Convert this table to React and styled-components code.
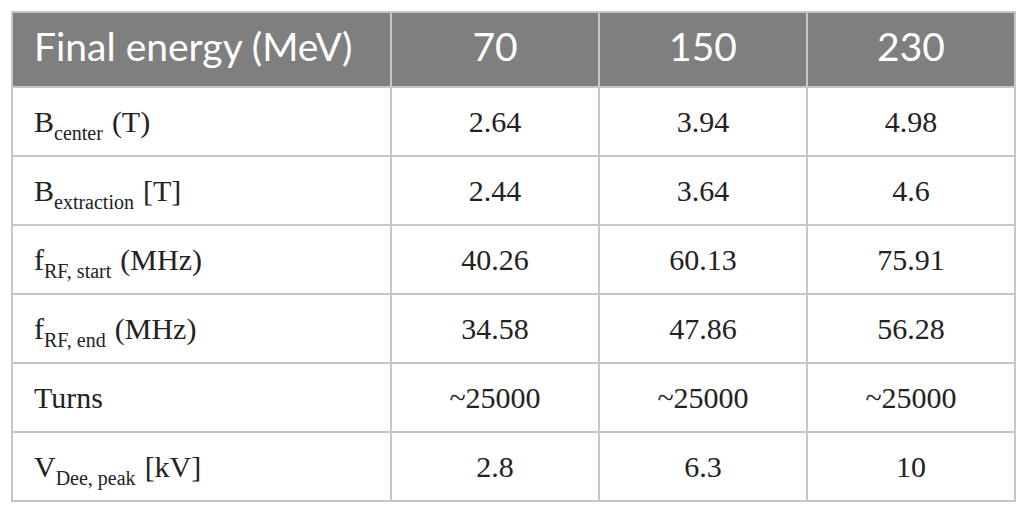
import React from "react";
import styled, { createGlobalStyle } from "styled-components";

const rows = [
  { base: "B", sub: "center", unit: "(T)", values: ["2.64", "3.94", "4.98"] },
  { base: "B", sub: "extraction", unit: "[T]", values: ["2.44", "3.64", "4.6"] },
  { base: "f", sub: "RF, start", unit: "(MHz)", values: ["40.26", "60.13", "75.91"] },
  { base: "f", sub: "RF, end", unit: "(MHz)", values: ["34.58", "47.86", "56.28"] },
  { base: "Turns", values: ["~25000", "~25000", "~25000"] },
  { base: "V", sub: "Dee, peak", unit: "[kV]", values: ["2.8", "6.3", "10"] },
];

const App = () => {
  return (
    <>
      <GlobalStyle />
      <Page>
        <Table>
          <colgroup>
            <col style={{ width: 379 }} />
            <col style={{ width: 208 }} />
            <col style={{ width: 208 }} />
            <col style={{ width: 208 }} />
          </colgroup>
          <thead>
            <tr>
              <HeadCell $left>Final energy (MeV)</HeadCell>
              <HeadCell>70</HeadCell>
              <HeadCell>150</HeadCell>
              <HeadCell>230</HeadCell>
            </tr>
          </thead>
          <tbody>
            {rows.map((row, i) => (
              <tr key={i}>
                <Cell $left>
                  {row.base}
                  {row.sub && <Sub>{row.sub}</Sub>}
                  {row.unit && <Unit>{row.unit}</Unit>}
                </Cell>
                {row.values.map((v, j) => (
                  <Cell key={j}>{v}</Cell>
                ))}
              </tr>
            ))}
          </tbody>
        </Table>
      </Page>
    </>
  );
};

export default App;

const GlobalStyle = createGlobalStyle`
  body {
    margin: 0;
    background: #ffffff;
  }
`;

// 표 바깥 여백
const Page = styled.div`
  padding: 11px 0 0 11px;
`;

const Table = styled.table`
  border-collapse: collapse;
  table-layout: fixed;
  width: 1003px;
`;

// 회색 머리줄
const HeadCell = styled.th`
  height: 67px;
  padding: 0 0 6px ${(p) => (p.$left ? "21px" : "0")};
  background: #7f7f7f;
  color: #ffffff;
  font-family: Lato, "Open Sans", sans-serif;
  font-weight: 400;
  font-size: 39px;
  line-height: 1;
  text-align: ${(p) => (p.$left ? "left" : "center")};
  border: 2px solid #c6c6c6;
`;

const Cell = styled.td`
  height: 66px;
  padding: 1px 0 0 ${(p) => (p.$left ? "21px" : "0")};
  color: #222222;
  font-family: "Liberation Serif", "Times New Roman", serif;
  font-size: 30px;
  line-height: 1;
  text-align: ${(p) => (p.$left ? "left" : "center")};
  border: 2px solid #c6c6c6;
  white-space: nowrap;
`;

const Sub = styled.sub`
  font-size: 20px;
  vertical-align: -8px;
  line-height: 0;
`;

const Unit = styled.span`
  margin-left: 9px;
`;
